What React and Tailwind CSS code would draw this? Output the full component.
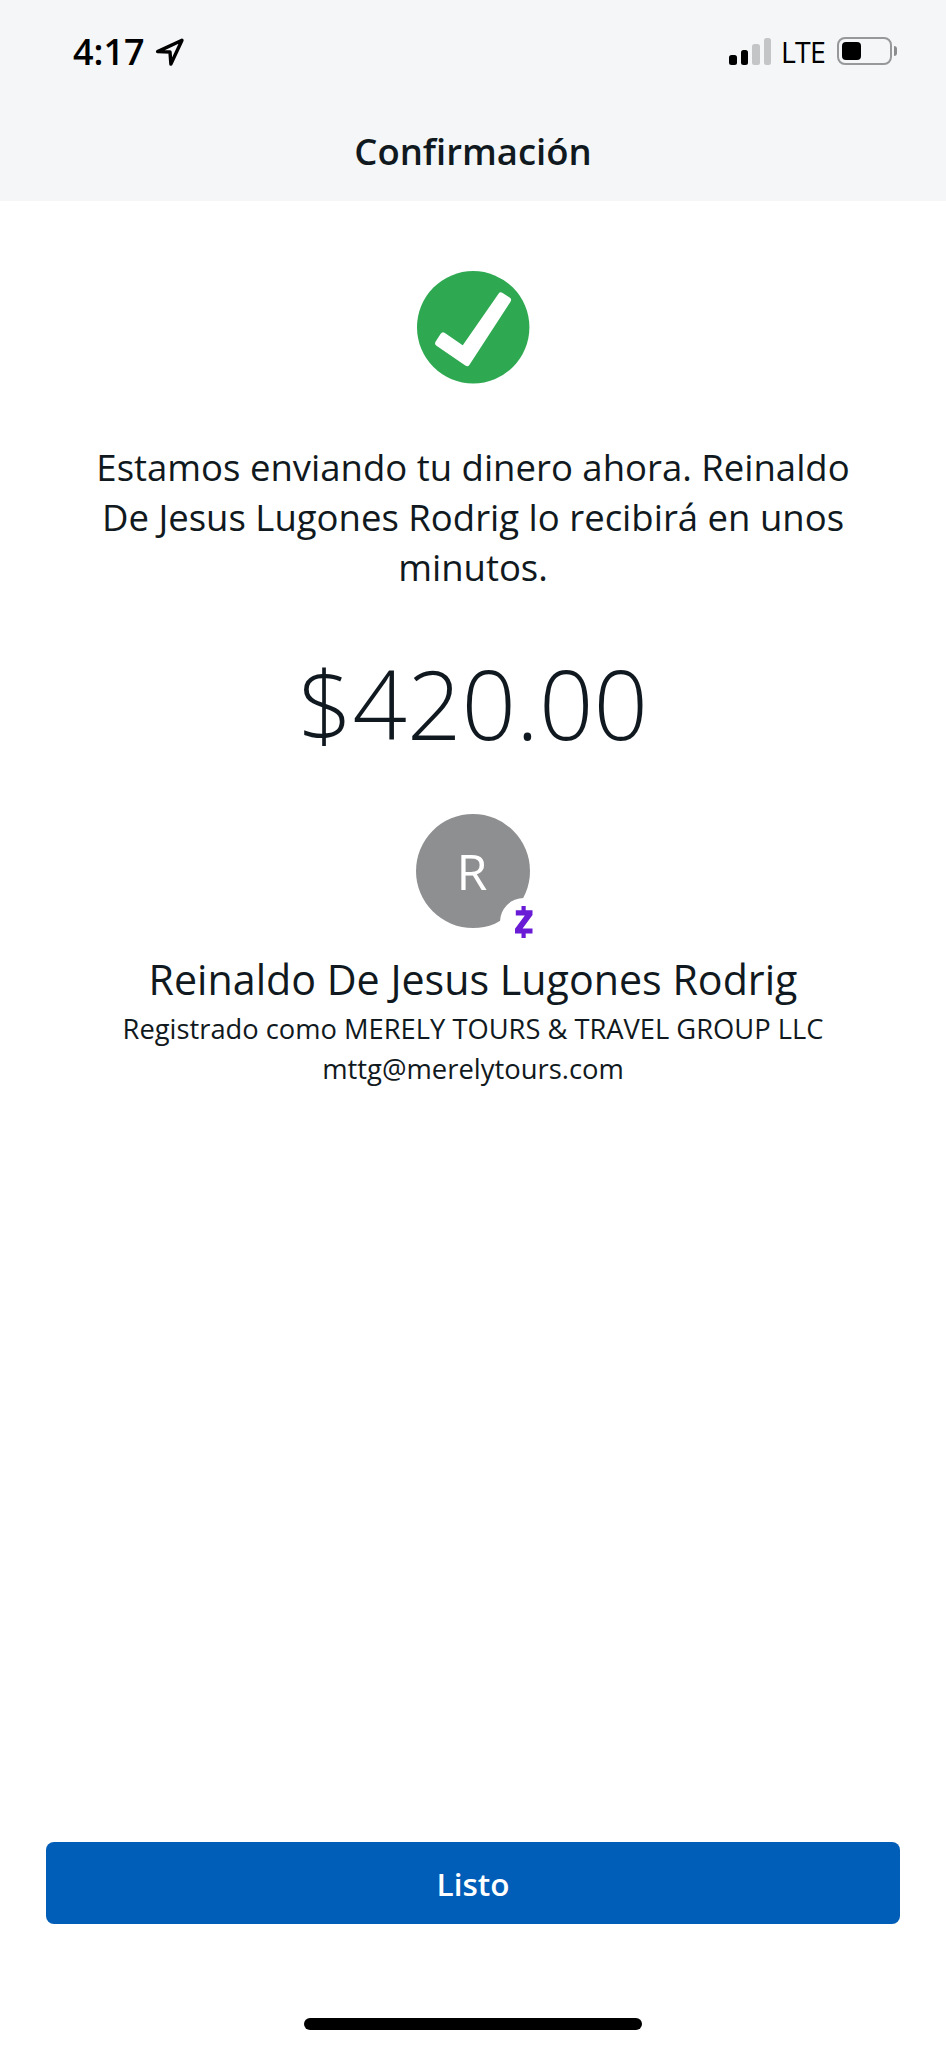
const transfer = {
  amount: '$420.00',
  recipient: 'Reinaldo De Jesus Lugones Rodrig',
  registeredAs: 'MERELY TOURS & TRAVEL GROUP LLC',
  email: 'mttg@merelytours.com',
};

function StatusBar() {
  return (
    <div className="flex items-start justify-between pl-[73px] pr-[49px] pt-[36px] text-black">
      <div className="flex items-start">
        <span className="w-[71px] text-[36px] leading-[31px] font-semibold">4:17</span>
        <svg className="ml-[11px] mt-px h-[30px] w-[30px]" viewBox="0 0 30 30" fill="none">
          <path
            d="M27 3.2 L2.6 14.6 L15 15 L15.9 27 Z"
            stroke="currentColor"
            strokeWidth="3.4"
            strokeLinejoin="round"
          />
        </svg>
      </div>

      <div className="flex items-start">
        {/* Signal strength */}
        <div className="mt-[2px] flex h-[27px] items-end gap-[4px]">
          <div className="h-[10px] w-[7.5px] rounded-[2.5px] bg-black"></div>
          <div className="h-[15px] w-[7.5px] rounded-[2.5px] bg-black"></div>
          <div className="h-[21px] w-[7.5px] rounded-[2.5px] bg-[#c4c5c6]"></div>
          <div className="h-[27px] w-[7.5px] rounded-[2.5px] bg-[#c4c5c6]"></div>
        </div>
        <span className="ml-[10px] mt-[1px] w-[45px] text-[28.5px] leading-[31px] font-medium tracking-[-0.8px]">LTE</span>
        {/* Battery */}
        <div className="ml-[11px] mt-px flex items-center gap-[2px]">
          <div className="h-[28px] w-[55px] rounded-[8px] border-2 border-[#97989a] p-[3px]">
            <div className="h-full w-[19px] rounded-[4px] bg-black"></div>
          </div>
          <div className="h-[10px] w-[3px] rounded-r-full bg-[#8b8c8d]"></div>
        </div>
      </div>
    </div>
  );
}

function SuccessIcon() {
  return (
    <svg className="h-[113px] w-[113px]" viewBox="0 0 113 113">
      <circle cx="56.2" cy="56.3" r="56.2" fill="#2ea951" />
      <path
        d="M84 24.5 L91 29 L50 92 L21.2 72.2 L26.2 64.5 L46.5 78.500 Z"
        fill="#fff"
        stroke="#fff"
        strokeWidth="6"
        strokeLinejoin="round"
      />
    </svg>
  );
}

function Avatar({ name }) {
  return (
    <div className="relative flex h-[114px] w-[114px] items-center justify-center rounded-full bg-[#8e8f90]">
      <span className="pr-[2px] text-[50px] leading-none font-medium text-white">{name[0]}</span>
      {/* Zelle badge */}
      <div className="absolute left-[84px] top-[84px] flex h-[48px] w-[48px] items-center justify-center rounded-full bg-white">
        <svg className="h-[32px] w-[18px]" viewBox="0 0 18 32" fill="#6a1bd6">
          <path d="M6.500 0h4.200v4.300h6.800v4.700L7.600 22.500H17.500v5h-6.800V32H6.500v-4.500H0v-4.700L9.800 9.500H.8V4.300h5.700z" />
        </svg>
      </div>
    </div>
  );
}

export default function App() {
  return (
    <div className="flex h-[2048px] w-[946px] flex-col bg-white font-['Open_Sans',sans-serif] text-[#111920]">
      <header className="flex h-[201px] flex-col bg-[#f4f6f8]">
        <StatusBar />
        <h1 className="mt-[59px] text-center text-[36.5px] leading-[48px] font-semibold">Confirmación</h1>
      </header>

      <main className="flex flex-1 flex-col items-center pt-[70px] text-center">
        <SuccessIcon />
        <p className="mt-[59px] w-[780px] text-[36.5px] leading-[49.8px]">
          {`Estamos enviando tu dinero ahora. ${transfer.recipient} lo recibirá en unos minutos.`}
        </p>
        <div className="mt-[56px] mb-[55.600px] text-[95.5px] leading-[110px] font-light">{transfer.amount}</div>
        <Avatar name={transfer.recipient} />
        <h2 className="mt-[27px] text-[41.2px] leading-[48px]">{transfer.recipient}</h2>
        <p className="mt-[6px] text-[27.3px] leading-[40px]">{`Registrado como ${transfer.registeredAs}`}</p>
        <p className="text-[27.4px] leading-[40px]">{transfer.email}</p>
      </main>

      <footer className="flex flex-col items-center px-[46px] pb-[18px]">
        <button className="h-[82px] w-full rounded-[8px] bg-[#005eb8] pt-px text-[31.5px] font-semibold text-white">
          Listo
        </button>
        <div className="mt-[94px] h-[12px] w-[338px] rounded-full bg-black"></div>
      </footer>
    </div>
  );
}
